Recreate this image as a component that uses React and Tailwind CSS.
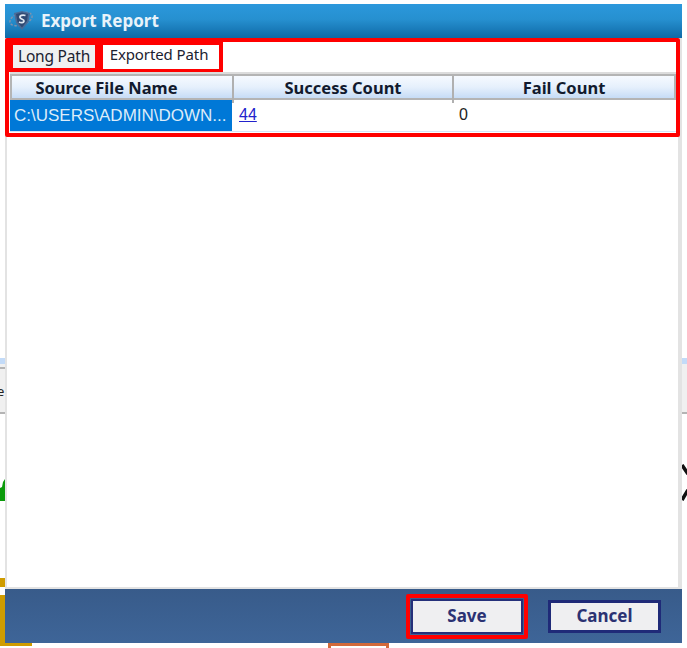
const ui = { fontFamily: '"Noto Sans", "Open Sans", sans-serif' };
const arial = { fontFamily: '"Liberation Sans", sans-serif' };

function Logo() {
  return (
    <svg width="26" height="24" viewBox="0 0 26 24" className="shrink-0">
      <ellipse cx="13" cy="10" rx="11.5" ry="6" fill="none" stroke="#8093ad" strokeWidth="1.4" strokeDasharray="2.5 1.5" transform="rotate(-18 13 10)" />
      <path d="M6 4 L14 2 L22 4 L20.5 13 L14 21 L8 14 Z" fill="#4b6b97" />
      <path d="M8 5 L14 3.5 L20 5 L19 12 L14 18.5 L9.5 13 Z" fill="#2f4a74" />
      <path d="M17.5 6.5 C14.5 5.5 11.5 6.5 12 8.5 C12.5 10.5 16.5 10 16 12.2 C15.6 13.8 13 14 11 13" fill="none" stroke="#dfe8f2" strokeWidth="1.7" />
    </svg>
  );
}

export default function App() {
  return (
    <div className="relative w-[687px] h-[648px] bg-white overflow-hidden" style={ui}>
      {/* Application showing behind the dialog */}
      <div className="absolute left-0 top-[358px] w-full h-[6px] bg-[#c3dbf8]" />
      <div className="absolute left-0 top-[364px] w-full h-[50px] bg-[#f0f0f0] border-b-2 border-[#b4b4b4]" />
      <div className="absolute left-0 top-[367px] w-[5px] h-[2px] bg-[#b4b4b4]" />
      <div className="absolute left-0 top-[384px] w-[5px] h-[14px] text-[13px] leading-[14px] text-[#222] overflow-hidden">
        <span className="block -ml-[3px]">e</span>
      </div>
      <svg className="absolute left-0 top-[478px]" width="5" height="24" viewBox="0 0 5 24">
        <path d="M0 10 L2 9 L3 4 L5 1 L5 23 L0 23 Z" fill="#0a9a0a" />
      </svg>
      <svg className="absolute left-[682px] top-[464px]" width="5" height="38" viewBox="0 0 5 38">
        <path d="M0 1 L6 10 M6 26 L0 36" stroke="#111" strokeWidth="3.5" fill="none" />
      </svg>
      <div className="absolute left-0 top-[578px] w-[5px] h-[9px] bg-[#cf9c00]" />
      <div className="absolute left-0 top-[595px] w-[5px] h-[48px] bg-[#cf9c00]" />
      <div className="absolute left-0 top-[643px] w-[32px] h-[3px] bg-[#cf9c00]" />
      <div className="absolute left-[328px] top-[643px] w-[61px] h-[5px] border-[3px] border-b-0 border-[#d2693a] bg-white" />

      {/* Dialog */}
      <div className="absolute left-[5px] top-[4px] w-[677px] h-[639px] flex flex-col">
        <div className="h-[34px] flex items-center gap-[7px] pl-[3px] pb-[1px] bg-[linear-gradient(to_bottom,#2b98dc,#2690d0_45%,#0f69a6)] shrink-0">
          <Logo />
          <span className="text-[17px] font-bold text-[#e9f3fa] leading-none">Export Report</span>
        </div>

        <div className="flex-1 flex flex-col bg-white border-l-2 border-r-4 border-b-2 border-[#e3e3e3] min-h-0">
          <div className="relative h-[99px] -ml-[2px] -mr-[2px] border-[4px] border-[#ff0000] rounded-[2px] shrink-0 flex flex-col bg-white">
            <div className="h-[27px] flex items-start shrink-0">
              <div className="h-[31px] w-[90px] -mt-[1px] border-[4px] border-[#ff0000] bg-[#f0f0f0] flex items-center justify-center text-[15.5px] tracking-[-0.2px] text-[#1b2230]">
                Long Path
              </div>
              <div className="h-[32px] w-[124px] -mt-[1px] border-[4px] border-[#ff0000] bg-white flex items-center justify-center text-[15px] tracking-[-0.1px] text-[#1b2230] pb-[5px] pr-[4px]">
                Exported Path
              </div>
            </div>
            <div className="mt-[3px] ml-[1px] flex-1 flex flex-col border-t-2 border-[#dcdcdc]">
              <div className="h-[26px] grid grid-cols-[222px_220px_1fr] border-2 border-[#b4b4b4] bg-[linear-gradient(to_bottom,#f6faff,#e6f0fc_50%,#c6dcf6)] text-[16.5px] font-bold text-[#111a2e] shrink-0">
                <div className="flex items-center justify-center border-r-2 border-[#b0b0b0] pr-[31px] pb-[2px] whitespace-nowrap">Source File Name</div>
                <div className="flex items-center justify-center border-r-2 border-[#b0b0b0] pb-[2px] whitespace-nowrap">Success Count</div>
                <div className="flex items-center justify-center pb-[2px] whitespace-nowrap">Fail Count</div>
              </div>
              <div className="h-[32px] grid grid-cols-[222px_220px_1fr] text-[16px] border-b border-[#d5e4f7]">
                <div className="bg-[#0078d7] text-[#dcecf9] text-[17px] flex items-center pl-[4px] whitespace-nowrap overflow-hidden" style={arial}>
                  C:\USERS\ADMIN\DOWN...
                </div>
                <div className="flex items-center pl-[7px] pb-[1px]">
                  <a href="#" className="text-[#2222cc] underline" style={arial}>44</a>
                </div>
                <div className="flex items-center pl-[7px] pb-[1px] text-[#222]" style={arial}>0</div>
              </div>
            </div>
          </div>
          <div className="flex-1" />
        </div>

        <div className="h-[54px] shrink-0 bg-[linear-gradient(to_bottom,#385b8a,#3e6598)] flex items-center justify-end gap-[20px] pr-[21px]">
          <div className="w-[122px] h-[45px] border-[4px] border-[#ff0000] rounded-[2px] flex">
            <button className="flex-1 m-[1px] border-2 border-[#25307a] bg-[#efeff1] text-[17px] font-bold text-[#2b3273]">Save</button>
          </div>
          <button className="w-[113px] h-[33px] border-[3px] border-[#1f2a78] bg-[#efeff1] text-[17px] font-bold text-[#2b3273]">Cancel</button>
        </div>
      </div>
    </div>
  );
}
